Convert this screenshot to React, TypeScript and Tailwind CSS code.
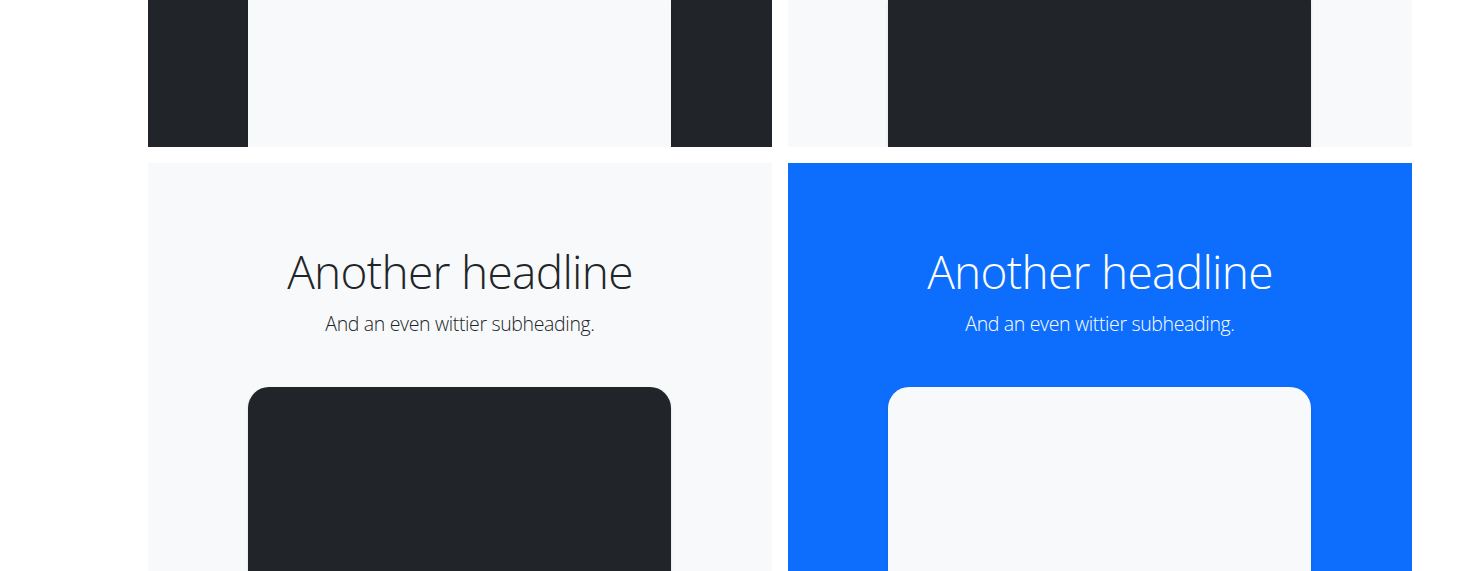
import React from "react";

const font = { fontFamily: '"Open Sans", "Noto Sans", sans-serif' };

function Card({ bg, box, textColor, top }: { bg: string; box: string; textColor: string; top?: boolean }) {
  if (top) {
    return (
      <div className={`w-[624px] h-[147px] overflow-hidden px-12 ${bg}`}>
        <div className={`ml-[52px] w-[423px] h-full shadow-sm ${box}`} />
      </div>
    );
  }
  return (
    <div className={`w-[624px] h-[524px] overflow-hidden px-12 pt-12 text-center ${bg} ${textColor}`}>
      <div className="my-4 p-4">
        <h2 className="text-[46px] leading-[57.6px] font-light tracking-[-0.7px] mb-2">Another headline</h2>
        <p className="text-[19.5px] leading-[30px] font-light tracking-[-0.35px] mb-4">And an even wittier subheading.</p>
      </div>
      <div className={`ml-[52px] w-[423px] h-[300px] rounded-t-[21px] shadow-sm ${box}`} />
    </div>
  );
}

export default function App() {
  return (
    <div className="w-[1480px] h-[571px] overflow-hidden bg-white" style={font}>
      <div className="flex gap-4 pl-[148px]">
        <Card top bg="bg-[#212529]" box="bg-[#f8f9fa]" textColor="text-white" />
        <Card top bg="bg-[#f8f9fa]" box="bg-[#212529]" textColor="text-[#212529]" />
      </div>
      <div className="flex gap-4 pl-[148px] mt-4">
        <Card bg="bg-[#f8f9fa]" box="bg-[#212529]" textColor="text-[#212529]" />
        <Card bg="bg-[#0d6efd]" box="bg-[#f8f9fa]" textColor="text-white" />
      </div>
    </div>
  );
}
